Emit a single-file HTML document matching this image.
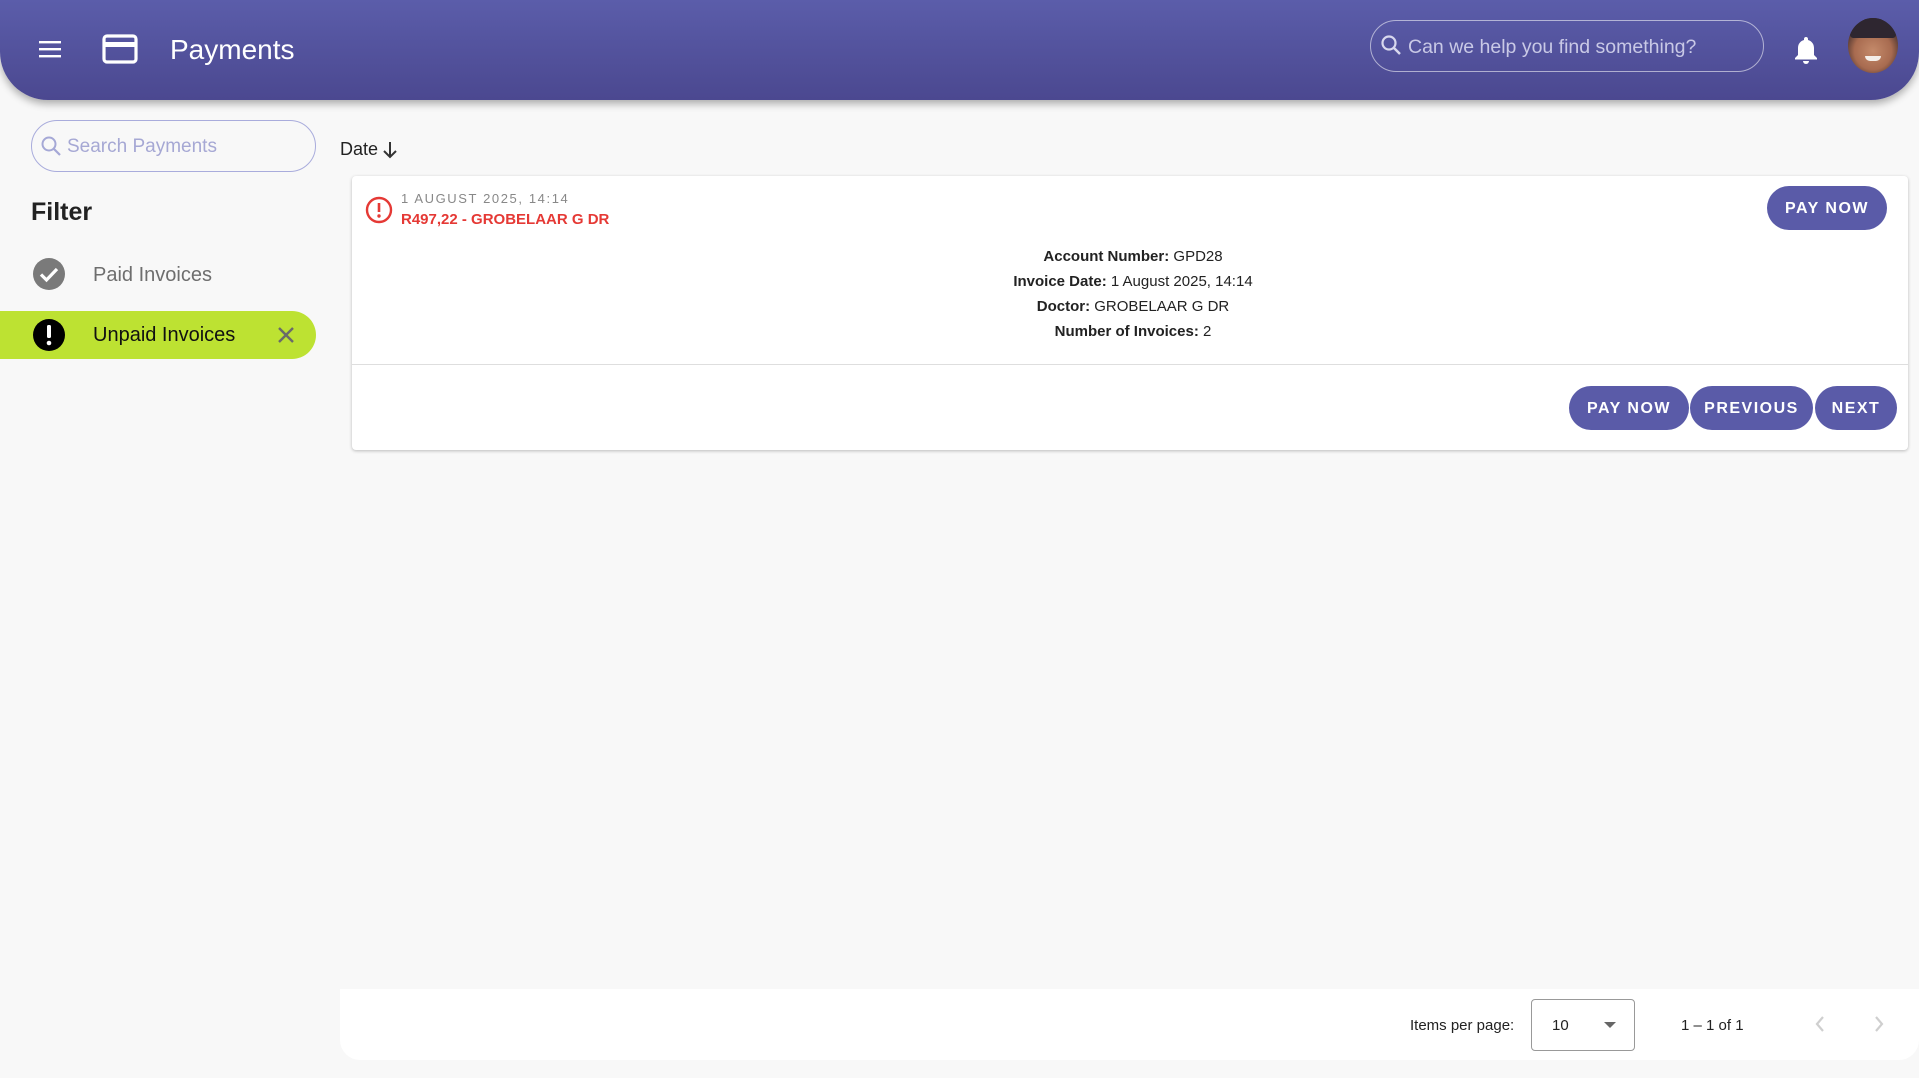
<!DOCTYPE html>
<html><head><meta charset="utf-8"><style>
*{box-sizing:border-box;margin:0;padding:0}
body{width:1919px;height:1078px;background:#f8f8f8;font-family:"Liberation Sans",Arial,sans-serif;position:relative;overflow:hidden;color:#222}
.hdr{position:absolute;left:0;top:0;width:1919px;height:100px;background:linear-gradient(#5b5daa,#4b4890);border-radius:0 0 48px 48px;box-shadow:0 4px 8px rgba(0,0,0,.3)}
.abs{position:absolute}
.btn{position:absolute;background:#5a5ba8;color:#fff;font-weight:bold;font-size:16px;letter-spacing:1.5px;border-radius:24px;display:flex;align-items:center;justify-content:center;padding-top:2px}
.det{position:absolute;left:352px;width:1562px;text-align:center;font-size:15px;color:#222}
.det b{font-weight:bold}
</style></head><body>
<div class="hdr">
  <svg class="abs" style="left:38px;top:38px" width="24" height="22" viewBox="0 0 24 22"><rect x="1" y="3" width="22" height="2.4" fill="#fff"/><rect x="1" y="10" width="22" height="2.4" fill="#fff"/><rect x="1" y="17" width="22" height="2.4" fill="#fff"/></svg>
  <svg class="abs" style="left:102px;top:34px" width="36" height="30" viewBox="0 0 36 30"><rect x="2" y="2" width="32" height="26" rx="3" fill="none" stroke="#fff" stroke-width="3.2"/><rect x="2" y="8" width="32" height="5" fill="#fff"/></svg>
  <div class="abs" style="left:170px;top:34px;font-size:28px;color:#fff;font-weight:500">Payments</div>
  <div class="abs" style="left:1370px;top:20px;width:394px;height:52px;border:1.5px solid rgba(255,255,255,.55);border-radius:26px"></div>
  <svg class="abs" style="left:1380px;top:34px" width="22" height="22" viewBox="0 0 22 22"><circle cx="9" cy="9" r="6.5" fill="none" stroke="#d8d8ee" stroke-width="2.2"/><line x1="13.5" y1="13.5" x2="20" y2="20" stroke="#d8d8ee" stroke-width="2.4"/></svg>
  <div class="abs" style="left:1408px;top:36px;font-size:19.5px;color:#c9c9e6">Can we help you find something?</div>
  <svg class="abs" style="left:1793px;top:35px" width="26" height="30" viewBox="0 0 26 30"><path d="M13 2c-1.2 0-2 .8-2 2v1c-3.8 1-6 4.2-6 8v7l-3 3v1.5h22V23l-3-3v-7c0-3.8-2.2-7-6-8V4c0-1.2-.8-2-2-2z" fill="#fff"/><path d="M10 26h6a3 3 0 0 1-6 0z" fill="#fff"/></svg>
  <div class="abs" style="left:1848px;top:18px;width:50px;height:55px;border-radius:50%;background:radial-gradient(circle at 50% 60%,#c48a6a 0,#a86b50 45%,#3a2a2a 75%);overflow:hidden">
    <div class="abs" style="left:2px;top:0;width:46px;height:20px;background:#2e2630;border-radius:20px 20px 4px 4px"></div>
    <div class="abs" style="left:17px;top:38px;width:16px;height:5px;background:#f4eee8;border-radius:0 0 8px 8px"></div>
  </div>
</div>

<div class="abs" style="left:31px;top:120px;width:285px;height:52px;border:1.5px solid #a9acdc;border-radius:26px"></div>
<svg class="abs" style="left:40px;top:135px" width="22" height="22" viewBox="0 0 22 22"><circle cx="9" cy="9" r="6.5" fill="none" stroke="#a5a8d6" stroke-width="2"/><line x1="13.5" y1="13.5" x2="20" y2="20" stroke="#a5a8d6" stroke-width="2.2"/></svg>
<div class="abs" style="left:67px;top:136px;font-size:19px;color:#a6a8d4">Search Payments</div>
<div class="abs" style="left:340px;top:139px;font-size:18px;color:#222">Date</div>
<svg class="abs" style="left:382px;top:140px" width="16" height="20" viewBox="0 0 16 20"><path d="M8 2v15M2 11l6 6 6-6" fill="none" stroke="#333" stroke-width="2"/></svg>
<div class="abs" style="left:31px;top:198px;font-size:25px;font-weight:bold;color:#222">Filter</div>
<svg class="abs" style="left:33px;top:258px" width="32" height="32" viewBox="0 0 32 32"><circle cx="16" cy="16" r="16" fill="#7a7a7a"/><path d="M8 16.5l5.5 5.5L24 11" fill="none" stroke="#fff" stroke-width="3.2"/></svg>
<div class="abs" style="left:93px;top:264px;font-size:20px;color:#6e6e6e">Paid Invoices</div>
<div class="abs" style="left:0;top:311px;width:316px;height:48px;background:#bde232;border-radius:0 24px 24px 0"></div>
<svg class="abs" style="left:33px;top:319px" width="32" height="32" viewBox="0 0 32 32"><circle cx="16" cy="16" r="16" fill="#000"/><rect x="14" y="6" width="4" height="13" rx="1.5" fill="#fff"/><circle cx="16" cy="24" r="2.3" fill="#fff"/></svg>
<div class="abs" style="left:93px;top:324px;font-size:20px;color:#111">Unpaid Invoices</div>
<svg class="abs" style="left:277px;top:326px" width="18" height="18" viewBox="0 0 18 18"><path d="M2 2l14 14M16 2L2 16" stroke="#6a6a6a" stroke-width="2.4"/></svg>

<div class="abs" style="left:352px;top:176px;width:1556px;height:274px;background:#fff;border-radius:4px;box-shadow:0 1px 3px rgba(0,0,0,.25)"></div>
<div class="abs" style="left:352px;top:364px;width:1556px;height:1px;background:#dedede"></div>
<svg class="abs" style="left:365px;top:196px" width="28" height="28" viewBox="0 0 28 28"><circle cx="14" cy="14" r="12" fill="none" stroke="#e53935" stroke-width="2.4"/><rect x="12.7" y="7" width="2.6" height="9" fill="#e53935"/><circle cx="14" cy="20" r="1.7" fill="#e53935"/></svg>
<div class="abs" style="left:401px;top:191px;font-size:13px;color:#888;letter-spacing:1.6px">1 AUGUST 2025, 14:14</div>
<div class="abs" style="left:401px;top:211px;font-size:15px;color:#e53935;font-weight:bold">R497,22 - GROBELAAR G DR</div>
<div class="btn" style="left:1767px;top:186px;width:120px;height:44px">PAY NOW</div>
<div class="det" style="top:248px"><b>Account Number:</b> GPD28</div>
<div class="det" style="top:273px"><b>Invoice Date:</b> 1 August 2025, 14:14</div>
<div class="det" style="top:298px"><b>Doctor:</b> GROBELAAR G DR</div>
<div class="det" style="top:323px"><b>Number of Invoices:</b> 2</div>
<div class="btn" style="left:1569px;top:386px;width:120px;height:44px">PAY NOW</div>
<div class="btn" style="left:1690px;top:386px;width:123px;height:44px">PREVIOUS</div>
<div class="btn" style="left:1815px;top:386px;width:82px;height:44px">NEXT</div>

<div class="abs" style="left:340px;top:989px;width:1579px;height:71px;background:#fff;border-radius:0 0 20px 20px"></div>
<div class="abs" style="left:1410px;top:1017px;font-size:15px;color:#222">Items per page:</div>
<div class="abs" style="left:1531px;top:999px;width:104px;height:52px;border:1px solid #999;border-radius:4px"></div>
<div class="abs" style="left:1552px;top:1017px;font-size:15px;color:#222">10</div>
<svg class="abs" style="left:1603px;top:1021px" width="14" height="8" viewBox="0 0 14 8"><path d="M1 1h12L7 7z" fill="#666"/></svg>
<div class="abs" style="left:1681px;top:1017px;font-size:15px;color:#222">1 – 1 of 1</div>
<svg class="abs" style="left:1814px;top:1015px" width="12" height="18" viewBox="0 0 12 18"><path d="M9 2L3 9l6 7" fill="none" stroke="#cfcfcf" stroke-width="2.2"/></svg>
<svg class="abs" style="left:1873px;top:1015px" width="12" height="18" viewBox="0 0 12 18"><path d="M3 2l6 7-6 7" fill="none" stroke="#cfcfcf" stroke-width="2.2"/></svg>
</body></html>
